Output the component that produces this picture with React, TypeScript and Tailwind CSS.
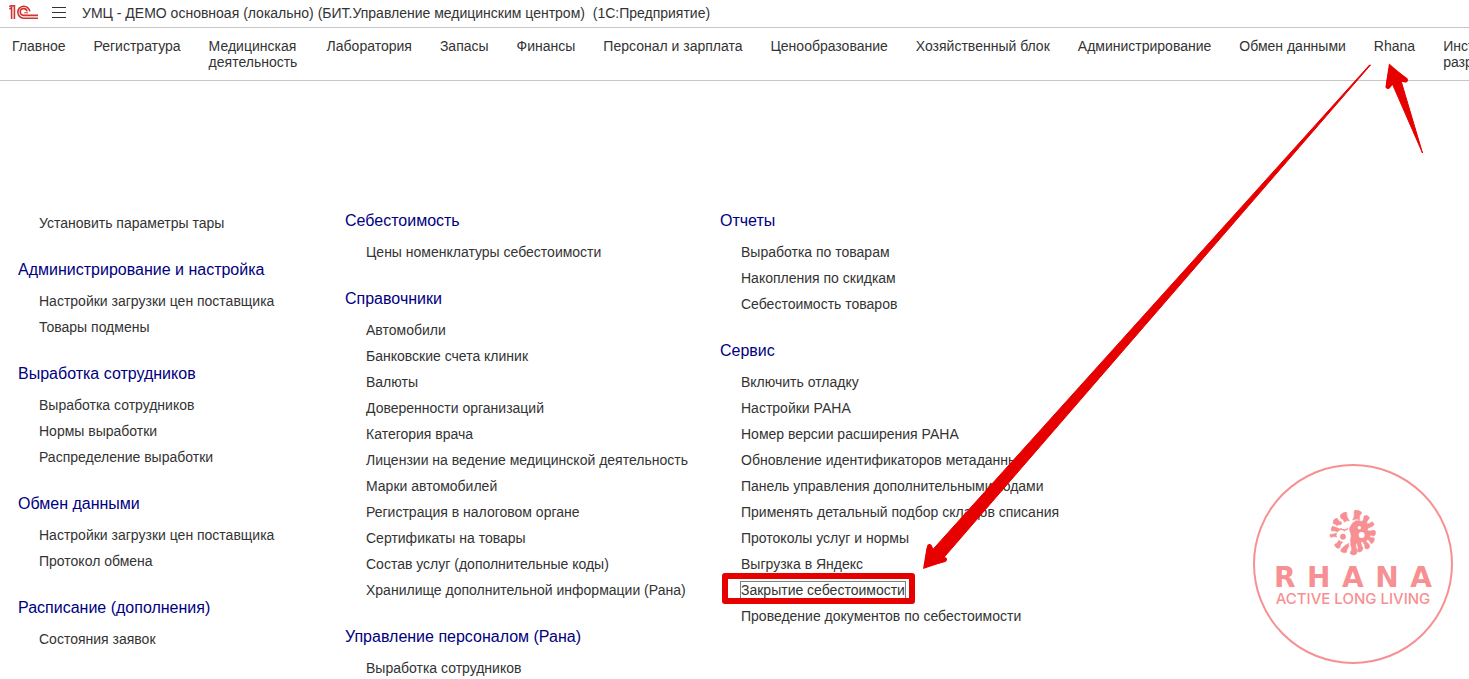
import clsx from "clsx";

type Section = {
  title?: string;
  items: string[];
};

const NAV_ITEMS = [
  "Главное",
  "Регистратура",
  "Медицинская деятельность",
  "Лаборатория",
  "Запасы",
  "Финансы",
  "Персонал и зарплата",
  "Ценообразование",
  "Хозяйственный блок",
  "Администрирование",
  "Обмен данными",
  "Rhana",
  "Инструменты разработчика",
];

// Эти разделы переносятся на две строки
const WRAPPED = ["Медицинская деятельность", "Инструменты разработчика"];

const ACTIVE_ITEM = "Закрытие себестоимости";

const COLUMNS: Section[][] = [
  [
    { items: ["Установить параметры тары"] },
    {
      title: "Администрирование и настройка",
      items: ["Настройки загрузки цен поставщика", "Товары подмены"],
    },
    {
      title: "Выработка сотрудников",
      items: ["Выработка сотрудников", "Нормы выработки", "Распределение выработки"],
    },
    {
      title: "Обмен данными",
      items: ["Настройки загрузки цен поставщика", "Протокол обмена"],
    },
    { title: "Расписание (дополнения)", items: ["Состояния заявок"] },
  ],
  [
    { title: "Себестоимость", items: ["Цены номенклатуры себестоимости"] },
    {
      title: "Справочники",
      items: [
        "Автомобили",
        "Банковские счета клиник",
        "Валюты",
        "Доверенности организаций",
        "Категория врача",
        "Лицензии на ведение медицинской деятельность",
        "Марки автомобилей",
        "Регистрация в налоговом органе",
        "Сертификаты на товары",
        "Состав услуг (дополнительные коды)",
        "Хранилище дополнительной информации (Рана)",
      ],
    },
    { title: "Управление персоналом (Рана)", items: ["Выработка сотрудников"] },
  ],
  [
    {
      title: "Отчеты",
      items: ["Выработка по товарам", "Накопления по скидкам", "Себестоимость товаров"],
    },
    {
      title: "Сервис",
      items: [
        "Включить отладку",
        "Настройки РАНА",
        "Номер версии расширения РАНА",
        "Обновление идентификаторов метаданных",
        "Панель управления дополнительными кодами",
        "Применять детальный подбор складов списания",
        "Протоколы услуг и нормы",
        "Выгрузка в Яндекс",
        ACTIVE_ITEM,
        "Проведение документов по себестоимости",
      ],
    },
  ],
];

export default function App() {
  return (
    <div className="relative overflow-hidden bg-white font-['Liberation_Sans',Arial,sans-serif] text-sm text-[#333333]">
      <TitleBar />
      <NavBar />
      <main className="grid grid-cols-[327px_375px_1fr] pt-[127px] pl-[18px]">
        {COLUMNS.map((sections, i) => (
          <div key={i} className={clsx("flex flex-col gap-[21px]", i === 0 && "pt-[2px]")}>
            {sections.map((section) => (
              <MenuSection key={section.title ?? "top"} {...section} />
            ))}
          </div>
        ))}
      </main>
      <RhanaLogo />
      <Arrows />
    </div>
  );
}

function TitleBar() {
  return (
    <header className="flex h-7 items-center border-b border-[#c6c6c6] pb-[2px] pl-[9px]">
      <OneCLogo />
      <button type="button" aria-label="Меню" className="ml-[14px]">
        <svg width="14" height="12" viewBox="0 0 14 12" className="block" shapeRendering="crispEdges">
          <path d="M0 .5h14M0 5.5h14M0 10.5h14" stroke="#333" />
        </svg>
      </button>
      <h1 className="ml-4 whitespace-pre">
        {"УМЦ - ДЕМО основноая (локально) (БИТ.Управление медицинским центром)  (1С:Предприятие)"}
      </h1>
    </header>
  );
}

function NavBar() {
  return (
    <nav className="flex h-[53px] gap-7 overflow-hidden border-b border-[#c6c6c6] pt-[10px] pl-3 leading-4">
      {NAV_ITEMS.map((item) => (
        <a
          key={item}
          href="#"
          className={clsx("shrink-0", WRAPPED.includes(item) ? "w-[90px]" : "whitespace-nowrap")}
        >
          {item}
        </a>
      ))}
    </nav>
  );
}

function MenuSection({ title, items }: Section) {
  return (
    <section>
      {title && <h2 className="mb-[5px] text-base leading-[26px] text-[#000080]">{title}</h2>}
      <ul className="pl-[21px]">
        {items.map((item) => (
          <li key={item} className="flex h-[26px] items-center whitespace-nowrap">
            {item === ACTIVE_ITEM ? <HighlightedLink label={item} /> : <a href="#">{item}</a>}
          </li>
        ))}
      </ul>
    </section>
  );
}

function HighlightedLink({ label }: { label: string }) {
  return (
    <a href="#" className="relative leading-4 outline outline-[#808080]">
      {label}
      <span className="absolute -top-[9px] -right-[10px] -bottom-[6px] -left-[19px] rounded-[3px] border-6 border-[#e60000]" />
    </a>
  );
}

function OneCLogo() {
  return (
    <svg width="29" height="15" viewBox="0 0 29 15" fill="none" stroke="#cf352e" strokeWidth="1.6" aria-label="1С">
      <path d="M.4 4.2 2.6 2.6V14M.2 1.6 2 .8H5.4V14" />
      <path d="M20.8 6.4A6 6 0 1 0 14.6 13.2H29" />
      <path d="M18 6.4A3.4 3.4 0 1 0 14.8 10.4H29" />
      <path d="M15.2 7.8H19" strokeWidth="1" />
    </svg>
  );
}

function RhanaLogo() {
  return (
    <div className="absolute top-[464px] right-4 flex size-[200px] flex-col items-center rounded-full border-2 border-[#f79092] pt-[43px] text-[#f79092]">
      <RhanaMark />
      <div className="mt-2 flex w-[158px] justify-between font-['DejaVu_Sans',sans-serif] text-[28px] leading-[26px] font-bold">
        {"RHANA".split("").map((letter, i) => (
          <span key={i}>{letter}</span>
        ))}
      </div>
      <div className="font-[Inter,sans-serif] text-[15px] leading-4 font-medium whitespace-nowrap">
        ACTIVE LONG LIVING
      </div>
    </div>
  );
}

function RhanaMark() {
  return (
    <svg width="48" height="48" viewBox="267 160 144 144" fill="currentColor" stroke="currentColor" strokeWidth="2" strokeLinejoin="round">
      {/* лучи слева */}
      <path d="M344 164q12-2 21 6l-2 5q-7 5-4 17-10-4-21 1 6-10 5-18-2-3 1-11Z" />
      <path d="M304 175q7-6 16-5-1 16 8 25-7-1-15 4-2-9-10-11-5-6 1-13Z" />
      <path d="M280 195q5-7 12-7 2 9 13 12l-2 7q-8-1-12 3-4-6-11-6Z" />
      <path d="M277 212q13 3 26 10-9 1-10 7-9-5-19-3-1-7 3-14Z" />
      <path d="M270 236q10 1 20-4-4 7 0 12-10-3-18 1-2-4-2-9Z" />
      <path d="M284 266q10-2 12-12 6 5 12 5-8 6-9 17-8 4-10-1-5-2-5-9Z" />
      <path d="M302 284q7-12 24-21-3 6 1 9-8 9-8 18-7 3-12-1-5 0-5-5Z" />
      {/* закрытый глаз и щека */}
      <circle cx="309" cy="243" r="8" />
      <path d="M301 218q6 5 10 4l2 3 3-3q4 1 8-4" fill="none" strokeWidth="4" />
      {/* правая половина */}
      <path d="M345 197q12-5 21 1 7-6 6-17 9-4 15 3 3 5-3 8-6 7-3 13 9 0 15-7 6 3 6 10-8 7-16 8-6 4-3 9 7 3 16-1 8-1 8 7-1 8-6 10-9-5-18-1 6 8 20 7 1 11-6 16-6 1-7-5-5-9-13-9 0 10 9 16 5 5 2 11-7 7-13 1 1-10-8-20-7 2-3 11 2 5 5 10-3 12-12 11l-5-2q5-11 0-22l-2-4q-5 6-1 18 3 6 1 15-10 8-19 0 0-7 4-10 1-8-3-16 2-8-1-14 5-12 1-22-8-13 1-22 4-11 15-14Z" />
      <circle cx="350" cy="240" r="14" />
      <circle cx="376" cy="240" r="14" />
      <circle cx="365" cy="238" r="9" fill="white" stroke="none" />
      <circle cx="358" cy="216" r="5" fill="white" stroke="none" />
    </svg>
  );
}

// Красные стрелки-указатели поверх страницы
function Arrows() {
  return (
    <svg
      width="1469"
      height="679"
      viewBox="0 0 1469 679"
      className="pointer-events-none absolute top-0 left-0"
      fill="#e60000"
      stroke="#e60000"
      strokeLinejoin="round"
    >
      <path d="M1370.5 65 943 558.5 931.5 551 1369.5 65Z" />
      <path d="M927 564 929.5 546.5 934 556 944.5 559.5Z" strokeWidth="5" />
      <path d="M923 569 926.5 548 944 562Z" stroke="none" />
      <path d="M1422.5 153 1391.5 82 1400.5 79Z" />
      <path d="M1391 69.5 1388 86.5 1395 78 1405.5 80Z" strokeWidth="5" />
      <path d="M1389 63.5 1386 84 1406 78Z" stroke="none" />
    </svg>
  );
}
